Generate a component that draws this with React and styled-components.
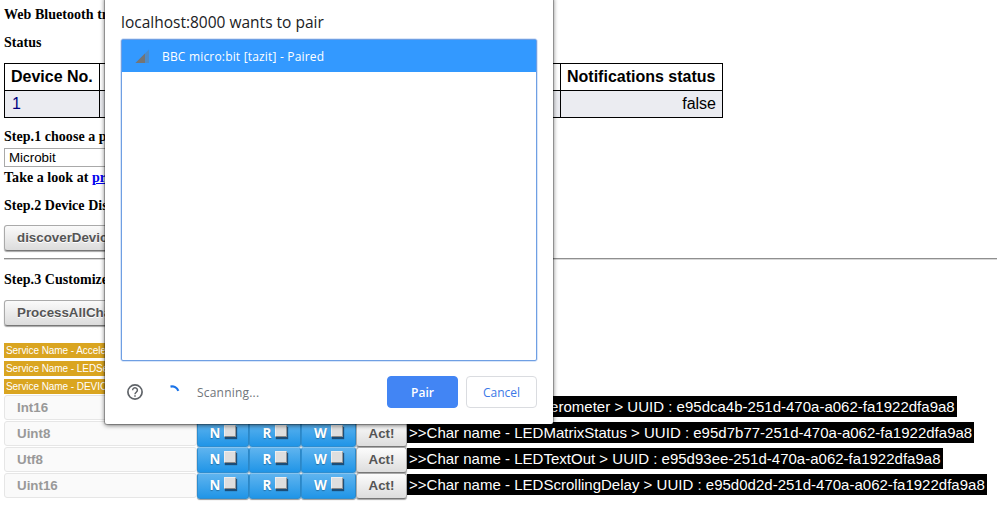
import React from "react";
import styled, { createGlobalStyle } from "styled-components";

const Global = createGlobalStyle`
  * { box-sizing: border-box; }
  body { margin: 0; background: #fff; overflow: hidden; }
`;

const Page = styled.main`
  position: relative;
  width: 997px;
  height: 518px;
  padding: 4px 0 0 4px;
  overflow: hidden;
  font-family: "Liberation Sans", Arial, sans-serif;
  color: #000;
`;

const Heading = styled.h4`
  margin: ${(p) => p.$top || 0}px 0 0;
  height: 20px;
  font: bold 14px/22px "Liberation Serif", "Times New Roman", serif;
  letter-spacing: 0.04px;
  white-space: nowrap;
  a { color: #0000ee; }
`;

const StatusTable = styled.table`
  margin-top: 11px;
  width: 719px;
  height: 55px;
  table-layout: fixed;
  border-collapse: collapse;
  font-size: 16px;
  line-height: 18px;
  th, td { border: 1px solid #000; padding: 0 6px; height: 27px; white-space: nowrap; }
  th { text-align: left; }
  td { background: #ebecf1; text-align: right; }
  td:first-child { color: #000080; text-align: left; padding-left: 7px; }
  th:first-child { width: 95px; }
  th:last-child { width: 162px; }
`;

const ProfileSelect = styled.div`
  margin-top: 2px;
  width: 180px;
  height: 19px;
  padding-left: 4px;
  border: 1px solid #a9a9a9;
  font-size: 13.33px;
  line-height: 17px;
`;

const ActionButton = styled.button`
  display: block;
  margin: ${(p) => p.$top}px 0 0;
  height: 26px;
  padding: 0 12px;
  border: 1px solid #aaa;
  border-bottom-color: #777;
  border-radius: 3px;
  background: linear-gradient(#fafafa, #dcdcdc);
  box-shadow: 0 1px 1px rgba(0, 0, 0, 0.35);
  color: #555;
  font: bold 13.33px/22px "Liberation Sans", Arial, sans-serif;
  text-shadow: 0 1px 0 #fff;
  white-space: nowrap;
`;

const Divider = styled.hr`
  margin: 7px 0 0;
  height: 2px;
  border: 0;
  border-top: 1px solid #8f8f8f;
  border-bottom: 1px solid #d8d8d8;
`;

const Services = styled.div`
  margin-top: 17px;
  display: flex;
  flex-direction: column;
  align-items: flex-start;
  gap: 3px;
`;

const ServiceTag = styled.span`
  height: 15px;
  padding: 0 2px;
  background: #daa520;
  color: #fff;
  font-size: 10px;
  line-height: 16px;
  letter-spacing: -0.06px;
  white-space: nowrap;
`;

const Characteristics = styled.div`
  margin-top: 1px;
`;

const CharRow = styled.div`
  display: flex;
  height: 26px;
`;

const TypeCell = styled.div`
  width: 193px;
  height: 25px;
  padding-left: 12px;
  border: 1px solid #e6e6e6;
  border-radius: 3px;
  background: #fafafa;
  color: #999;
  font-weight: bold;
  font-size: 13.33px;
  line-height: 23px;
`;

const Toggle = styled.label`
  display: flex;
  justify-content: center;
  gap: 4px;
  width: ${(p) => p.$width}px;
  height: 26px;
  padding: 2px 0 0;
  border: 1px solid #2e8dcf;
  border-top-color: #87c4ef;
  border-radius: 3px;
  background: linear-gradient(#5fb4ef, #2095e7);
  box-shadow: 0 1px 1px rgba(0, 0, 0, 0.4);
  color: #fff;
  font: bold 13.33px/19px "Open Sans", sans-serif;
  text-shadow: 0 1px 1px rgba(0, 0, 0, 0.3);
`;

const Check = styled.span`
  width: 12px;
  height: 12px;
  margin-top: 1px;
  border: 1px solid #eee;
  border-right-color: #999;
  border-bottom-color: #888;
  background: #dedede;
  box-shadow: 1px 2px 1px rgba(20, 50, 80, 0.75);
`;

const Act = styled.button`
  width: 51px;
  height: 26px;
  padding: 0 0 1px;
  border: 1px solid #aaa;
  border-bottom-color: #777;
  border-radius: 3px;
  background: linear-gradient(#fcfcfc, #dddddd);
  box-shadow: 0 1px 1px rgba(0, 0, 0, 0.35);
  color: #555;
  font: bold 13.33px/22px "Liberation Sans", Arial, sans-serif;
`;

const CharName = styled.span`
  height: 21px;
  margin-top: 1px;
  padding: 0 2px;
  background: #000;
  color: #fff;
  font-size: 15px;
  line-height: 21px;
  letter-spacing: 0.01px;
  white-space: nowrap;
`;

const Dialog = styled.section`
  position: absolute;
  left: 105px;
  top: -4px;
  width: 448px;
  height: 428px;
  padding: 16px 16px 0;
  background: #fff;
  border-radius: 2px;
  box-shadow: 0 0 0 1px rgba(0, 0, 0, 0.22), 0 1px 5px rgba(0, 0, 0, 0.65);
  font-family: "Open Sans", "Noto Sans", sans-serif;
`;

const DialogTitle = styled.h1`
  margin: 0;
  height: 27px;
  font-size: 15.5px;
  font-weight: 400;
  line-height: 20px;
  color: #202124;
  white-space: nowrap;
`;

const DeviceList = styled.div`
  width: 416px;
  height: 322px;
  border: 1px solid #6f9fe3;
  border-radius: 2px;
  box-shadow: 0 0 0 0.5px #b4cdf3;
`;

const Device = styled.div`
  display: flex;
  align-items: center;
  height: 32px;
  padding-left: 13px;
  gap: 12px;
  background: #3399ff;
  color: #fff;
  font-size: 12px;
  font-weight: 500;
  letter-spacing: 0.18px;
  white-space: nowrap;
`;

const Footer = styled.footer`
  display: flex;
  align-items: center;
  height: 32px;
  margin-top: 15px;
  padding-left: 5px;
`;

const Scanning = styled.span`
  flex: 1;
  margin-left: 16px;
  color: #70757a;
  font-size: 12px;
  letter-spacing: 0.2px;
`;

const Spinner = styled.svg`
  margin-left: 20px;
`;

const DialogButton = styled.button`
  flex: none;
  width: 71px;
  height: 32px;
  margin-left: ${(p) => (p.$primary ? 0 : 8)}px;
  padding: 0;
  border: 1px solid ${(p) => (p.$primary ? "#4285f4" : "#dadce0")};
  border-radius: 4px;
  background: ${(p) => (p.$primary ? "#4285f4" : "#fff")};
  color: ${(p) => (p.$primary ? "#fff" : "#3b78e7")};
  font: ${(p) => (p.$primary ? 600 : 400)} 12px "Open Sans", sans-serif;
`;

const services = ["Accelerometer", "LEDService", "DEVICE"];
const rows = [
  ["Int16", "Accelerometer", "e95dca4b-251d-470a-a062-fa1922dfa9a8"],
  ["Uint8", "LEDMatrixStatus", "e95d7b77-251d-470a-a062-fa1922dfa9a8"],
  ["Utf8", "LEDTextOut", "e95d93ee-251d-470a-a062-fa1922dfa9a8"],
  ["Uint16", "LEDScrollingDelay", "e95d0d2d-251d-470a-a062-fa1922dfa9a8"],
];
const toggles = [["N", 52], ["R", 52], ["W", 55]];

export default function App() {
  return (
    <Page>
      <Global />
      <Heading>Web Bluetooth transfer</Heading>
      <Heading $top={8}>Status</Heading>
      <StatusTable>
        <thead>
          <tr><th>Device No.</th><th /><th>Notifications status</th></tr>
        </thead>
        <tbody>
          <tr><td>1</td><td /><td>false</td></tr>
        </tbody>
      </StatusTable>
      <Heading $top={8}>Step.1 choose a profile</Heading>
      <ProfileSelect>Microbit</ProfileSelect>
      <Heading>Take a look at <a href="#profile">profile</a></Heading>
      <Heading $top={8}>Step.2 Device Discovery</Heading>
      <ActionButton $top={10}>discoverDevice</ActionButton>
      <Divider />
      <Heading $top={9}>Step.3 Customize</Heading>
      <ActionButton $top={11}>ProcessAllChars</ActionButton>
      <Services>
        {services.map((s) => <ServiceTag key={s}>Service Name - {s}</ServiceTag>)}
      </Services>
      <Characteristics>
        {rows.map(([type, name, uuid]) => (
          <CharRow key={uuid}>
            <TypeCell>{type}</TypeCell>
            {toggles.map(([label, width]) => (
              <Toggle key={label} $width={width}>{label}<Check /></Toggle>
            ))}
            <Act>Act!</Act>
            <CharName>&gt;&gt;Char name - {name} &gt; UUID : {uuid}</CharName>
          </CharRow>
        ))}
      </Characteristics>

      <Dialog>
        <DialogTitle>localhost:8000 wants to pair</DialogTitle>
        <DeviceList>
          <Device>
            <svg width="15" height="15" viewBox="0 0 15 15">
              <path d="M14 0.5V14H0.5Z" fill="#4b8bcb" />
              <path d="M10 4.5V14H0.5Z" fill="#757575" />
            </svg>
            BBC micro:bit [tazit] - Paired
          </Device>
        </DeviceList>
        <Footer>
          <svg width="18" height="18" viewBox="0 0 18 18" fill="none" stroke="#5f6368" strokeWidth="1.7">
            <circle cx="9" cy="9" r="7.1" />
            <path d="M6.6 7.2a2.4 2.4 0 1 1 3.7 2C9.4 9.8 9 10 9 11.2M9 12.2v1.6" strokeWidth="1.5" />
          </svg>
          <Spinner width="17" height="17" viewBox="0 0 17 17" fill="none">
            <path d="M6.5 2.6a6.8 6.8 0 0 1 7.8 4.2" stroke="#1a73e8" strokeWidth="2.2" />
          </Spinner>
          <Scanning>Scanning...</Scanning>
          <DialogButton $primary>Pair</DialogButton>
          <DialogButton>Cancel</DialogButton>
        </Footer>
      </Dialog>
    </Page>
  );
}
